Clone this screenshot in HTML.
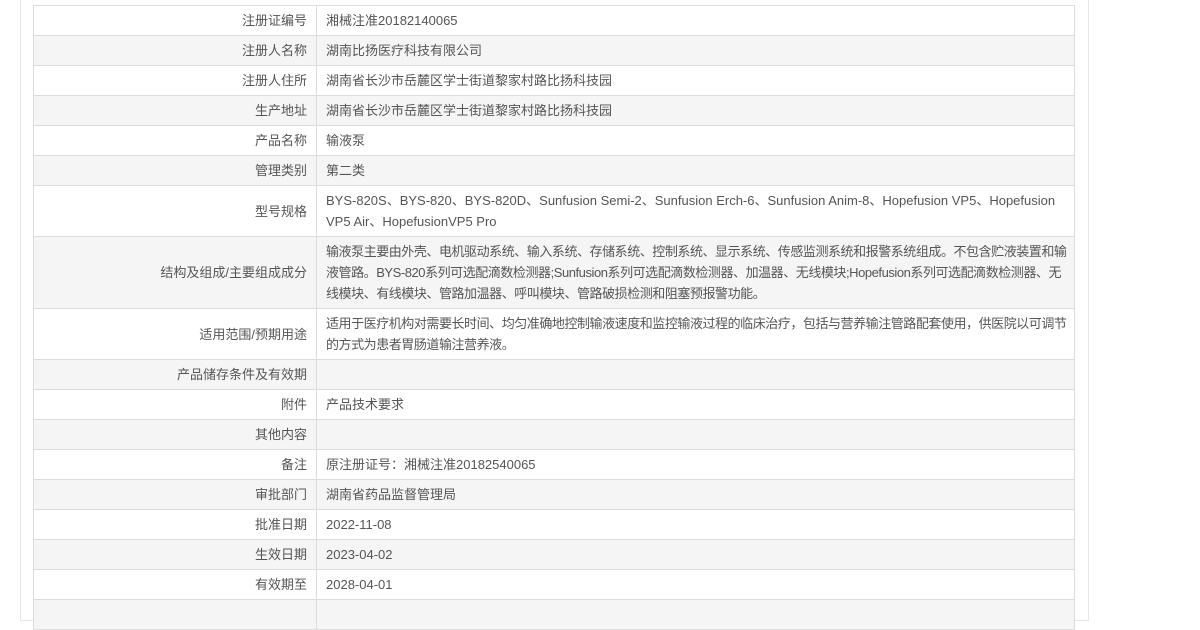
<!DOCTYPE html>
<html><head><meta charset="utf-8"><style>
html,body{margin:0;background:#fff;width:1200px;height:610px;overflow:hidden;font-family:"Liberation Sans","Microsoft YaHei","Noto Sans CJK SC",sans-serif;font-size:13px;color:#555}
.box{position:absolute;left:20px;top:-10px;width:1067px;height:630px;border:1px solid #e6e6e6;border-top:none}
table{position:absolute;left:33px;top:5px;width:1042px;border-collapse:collapse}
td{border:1px solid #dcdcdc;padding:4px 3px 4px 9px;line-height:21px;height:21px;vertical-align:middle}
td.l{width:264px;text-align:right;padding-right:9px}
tr:nth-child(even) td{background:#f5f5f5}
.t{letter-spacing:-0.45px}
</style></head><body><div class="box"></div>
<table>
<tr><td class="l">注册证编号</td><td>湘械注准20182140065</td></tr>
<tr><td class="l">注册人名称</td><td>湖南比扬医疗科技有限公司</td></tr>
<tr><td class="l">注册人住所</td><td>湖南省长沙市岳麓区学士街道黎家村路比扬科技园</td></tr>
<tr><td class="l">生产地址</td><td>湖南省长沙市岳麓区学士街道黎家村路比扬科技园</td></tr>
<tr><td class="l">产品名称</td><td>输液泵</td></tr>
<tr><td class="l">管理类别</td><td>第二类</td></tr>
<tr><td class="l">型号规格</td><td>BYS-820S、BYS-820、BYS-820D、Sunfusion Semi-2、Sunfusion Erch-6、Sunfusion Anim-8、Hopefusion VP5、Hopefusion VP5 Air、HopefusionVP5 Pro</td></tr>
<tr><td class="l">结构及组成/主要组成成分</td><td class="t">输液泵主要由外壳、电机驱动系统、输入系统、存储系统、控制系统、显示系统、传感监测系统和报警系统组成。不包含贮液装置和输液管路。BYS-820系列可选配滴数检测器;Sunfusion系列可选配滴数检测器、加温器、无线模块;Hopefusion系列可选配滴数检测器、无线模块、有线模块、管路加温器、呼叫模块、管路破损检测和阻塞预报警功能。</td></tr>
<tr><td class="l">适用范围/预期用途</td><td class="t">适用于医疗机构对需要长时间、均匀准确地控制输液速度和监控输液过程的临床治疗，包括与营养输注管路配套使用，供医院以可调节的方式为患者胃肠道输注营养液。</td></tr>
<tr><td class="l">产品储存条件及有效期</td><td></td></tr>
<tr><td class="l">附件</td><td>产品技术要求</td></tr>
<tr><td class="l">其他内容</td><td></td></tr>
<tr><td class="l">备注</td><td>原注册证号：湘械注准20182540065</td></tr>
<tr><td class="l">审批部门</td><td>湖南省药品监督管理局</td></tr>
<tr><td class="l">批准日期</td><td>2022-11-08</td></tr>
<tr><td class="l">生效日期</td><td>2023-04-02</td></tr>
<tr><td class="l">有效期至</td><td>2028-04-01</td></tr>
<tr><td class="l">&nbsp;</td><td></td></tr>
</table></body></html>
